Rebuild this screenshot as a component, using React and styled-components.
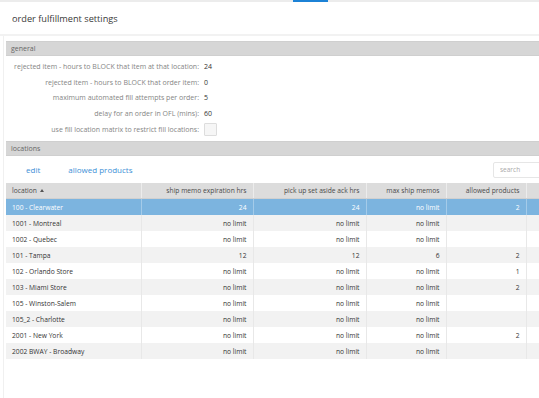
import styled, { createGlobalStyle } from "styled-components";

const GlobalStyle = createGlobalStyle`
	html, body {
		margin: 0;
		padding: 0;
		background: #fff;
		overflow: hidden;
	}
	body {
		font-family: "Open Sans", "Liberation Sans", sans-serif;
		color: #444;
	}
`;

const settings = [
	{ label: "rejected item - hours to BLOCK that item at that location:", value: "24" },
	{ label: "rejected item - hours to BLOCK that order item:", value: "0" },
	{ label: "maximum automated fill attempts per order:", value: "5" },
	{ label: "delay for an order in OFL (mins):", value: "60" },
];

const columns = [
	{ title: "location", width: 135, align: "left", sorted: true },
	{ title: "ship memo expiration hrs", width: 112 },
	{ title: "pick up set aside ack hrs", width: 113 },
	{ title: "max ship memos", width: 80 },
	{ title: "allowed products", width: 80 },
	{ title: "", width: 40 },
];

const rows = [
	["100 - Clearwater", "24", "24", "no limit", "2"],
	["1001 - Montreal", "no limit", "no limit", "no limit", ""],
	["1002 - Quebec", "no limit", "no limit", "no limit", ""],
	["101 - Tampa", "12", "12", "6", "2"],
	["102 - Orlando Store", "no limit", "no limit", "no limit", "1"],
	["103 - Miami Store", "no limit", "no limit", "no limit", "2"],
	["105 - Winston-Salem", "no limit", "no limit", "no limit", ""],
	["105_2 - Charlotte", "no limit", "no limit", "no limit", ""],
	["2001 - New York", "no limit", "no limit", "no limit", "2"],
	["2002 BWAY - Broadway", "no limit", "no limit", "no limit", ""],
];

const App = () => {
	return (
		<>
			<GlobalStyle />
			<TopStrip>
				<ActiveTab />
			</TopStrip>
			<TitleBar>order fulfillment settings</TitleBar>

			<Content>
				<SectionHeader>general</SectionHeader>
				<SettingsGrid>
					{settings.map((s) => (
						<SettingRow key={s.label}>
							<SettingLabel>{s.label}</SettingLabel>
							<SettingValue>{s.value}</SettingValue>
						</SettingRow>
					))}
					<SettingRow $tall>
						<SettingLabel>use fill location matrix to restrict fill locations:</SettingLabel>
						<Checkbox />
					</SettingRow>
				</SettingsGrid>

				<SectionHeader $gap>locations</SectionHeader>
				<Toolbar>
					<ToolLink>edit</ToolLink>
					<ToolLink>allowed products</ToolLink>
					<SearchBox placeholder="search" />
				</Toolbar>

				<Table>
					<colgroup>
						{columns.map((c, i) => (
							<col key={i} style={{ width: c.width }} />
						))}
					</colgroup>
					<thead>
						<tr>
							{columns.map((c, i) => (
								<HeadCell key={i} $align={c.align}>
									{c.title}
									{c.sorted && <SortArrow />}
								</HeadCell>
							))}
						</tr>
					</thead>
					<tbody>
						{rows.map((r, i) => (
							<BodyRow key={r[0]} $selected={i === 0} $odd={i % 2 === 1}>
								{r.map((cell, j) => (
									<Cell key={j} $align={j === 0 ? "left" : "right"}>
										{cell}
									</Cell>
								))}
								<Cell />
							</BodyRow>
						))}
					</tbody>
				</Table>
			</Content>
		</>
	);
};

export default App;

const TopStrip = styled.div`
	height: 2px;
	background: #ececec;
	display: flex;
`;

const ActiveTab = styled.div`
	margin-left: 293px;
	width: 35px;
	height: 2px;
	background: #1c82d6;
`;

const TitleBar = styled.div`
	height: 32px;
	display: flex;
	align-items: center;
	padding-left: 12px;
	font-size: 9.2px;
	color: #3a3a3a;
	border-bottom: 2px solid #f2f2f2;
`;

const Content = styled.div`
	margin-left: 3px;
	padding: 5px 0 40px 2px;
	border-left: 1px solid #f0f0f0;
	overflow: hidden;
`;

const SectionHeader = styled.div`
	width: 560px;
	height: 13px;
	line-height: 13px;
	background: #d6d6d6;
	border-top: 1px solid #cfcfcf;
	border-bottom: 1px solid #cfcfcf;
	padding-left: 5px;
	font-size: 7px;
	color: #666;
	margin-top: ${(p) => (p.$gap ? "4px" : "0")};
`;

const SettingsGrid = styled.div`
	padding-top: 3px;
	display: flex;
	flex-direction: column;
`;

const SettingRow = styled.div`
	display: grid;
	grid-template-columns: 193px auto;
	column-gap: 5px;
	align-items: center;
	height: ${(p) => (p.$tall ? "16px" : "15.5px")};
`;

const SettingLabel = styled.span`
	text-align: right;
	font-size: 7px;
	color: #858585;
	white-space: nowrap;
`;

const SettingValue = styled.span`
	font-size: 7px;
	color: #333;
`;

const Checkbox = styled.span`
	display: block;
	width: 11px;
	height: 11px;
	border: 1px solid #ddd;
	border-radius: 1px;
	background: #f6f6f6;
`;

const Toolbar = styled.div`
	width: 539px;
	height: 27px;
	display: flex;
	align-items: center;
	padding-left: 20px;
	gap: 28px;
	box-sizing: border-box;
`;

const ToolLink = styled.a`
	font-size: 8px;
	color: #3d8fd6;
	cursor: pointer;
`;

const SearchBox = styled.input`
	margin-left: auto;
	margin-right: -20px;
	width: 58px;
	height: 14px;
	padding: 0 6px;
	border: 1px solid #e6e6e6;
	border-radius: 2px;
	font-family: "Open Sans", sans-serif;
	font-size: 6.5px;
	outline: none;

	&::placeholder {
		color: #aaa;
	}
`;

const Table = styled.table`
	border-collapse: collapse;
	table-layout: fixed;
	width: 560px;
	font-size: 6.7px;
`;

const HeadCell = styled.th`
	height: 15px;
	padding: 0 6px;
	background: #dcdcdc;
	color: #4a4a4a;
	font-weight: normal;
	text-align: ${(p) => p.$align || "right"};
	white-space: nowrap;
	border-right: 1px solid #ececec;
	border-bottom: 1px solid #d0d0d0;
`;

const SortArrow = styled.span`
	display: inline-block;
	margin-left: 3px;
	vertical-align: 1px;
	border-left: 2px solid transparent;
	border-right: 2px solid transparent;
	border-bottom: 3px solid #555;
`;

const BodyRow = styled.tr`
	background: ${(p) => (p.$selected ? "#7cb4df" : p.$odd ? "#f2f2f2" : "#fff")};
	color: ${(p) => (p.$selected ? "#fff" : "#333")};

	td {
		border-right: 1px solid ${(p) => (p.$selected ? "#a4cbe9" : "#e8e8e8")};
	}
`;

const Cell = styled.td`
	height: 16px;
	padding: 0 6px;
	text-align: ${(p) => p.$align || "right"};
	white-space: nowrap;
	overflow: hidden;
`;
